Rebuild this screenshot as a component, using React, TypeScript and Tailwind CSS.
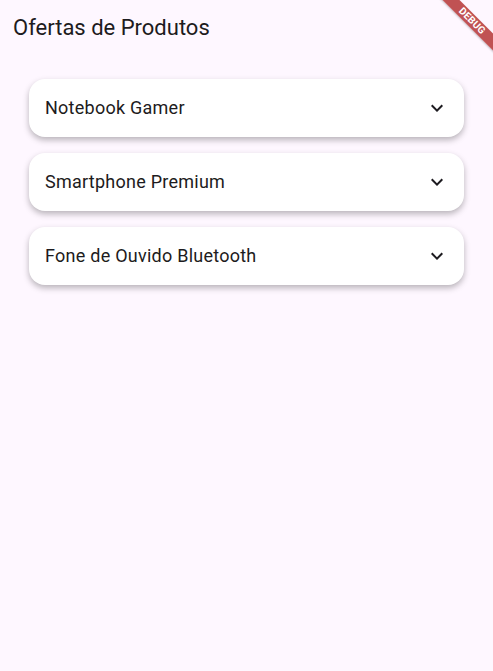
import React from "react";

const items = ["Notebook Gamer", "Smartphone Premium", "Fone de Ouvido Bluetooth"];

function Chevron() {
  return (
    <svg width="24" height="24" viewBox="0 0 24 24" className="shrink-0">
      <path d="M16.59 8.59 12 13.17 7.41 8.59 6 10l6 6 6-6z" fill="#1d1b20" />
    </svg>
  );
}

export default function App() {
  return (
    <div className="relative w-[493px] h-[671px] overflow-hidden bg-[#fef7ff]" style={{ fontFamily: "Roboto, sans-serif" }}>
      <div className="h-[56px] flex items-center px-[13px]">
        <span className="text-[22px] text-[#1d1b20] leading-none">Ofertas de Produtos</span>
      </div>
      <div className="flex flex-col gap-[16px] px-[29px] pt-[23px]">
        {items.map((t) => (
          <div
            key={t}
            className="h-[58px] rounded-[16px] bg-white flex items-center justify-between pl-[16px] pr-[15px] shadow-[0_3px_6px_rgba(0,0,0,0.28)]"
          >
            <span className="text-[18px] tracking-[0.25px] text-[#1d1b20] leading-none">{t}</span>
            <Chevron />
          </div>
        ))}
      </div>
      <div className="absolute top-0 right-0 w-[60px] h-[60px] overflow-hidden pointer-events-none">
        <div className="absolute left-[-6px] top-[15px] w-[90px] h-[12px] bg-[rgba(176,40,40,0.8)] rotate-45 flex items-center justify-center shadow-[0_1px_2px_rgba(0,0,0,0.2)]">
          <span className="text-white text-[10px] font-bold leading-none tracking-[0.2px]">DEBUG</span>
        </div>
      </div>
    </div>
  );
}
